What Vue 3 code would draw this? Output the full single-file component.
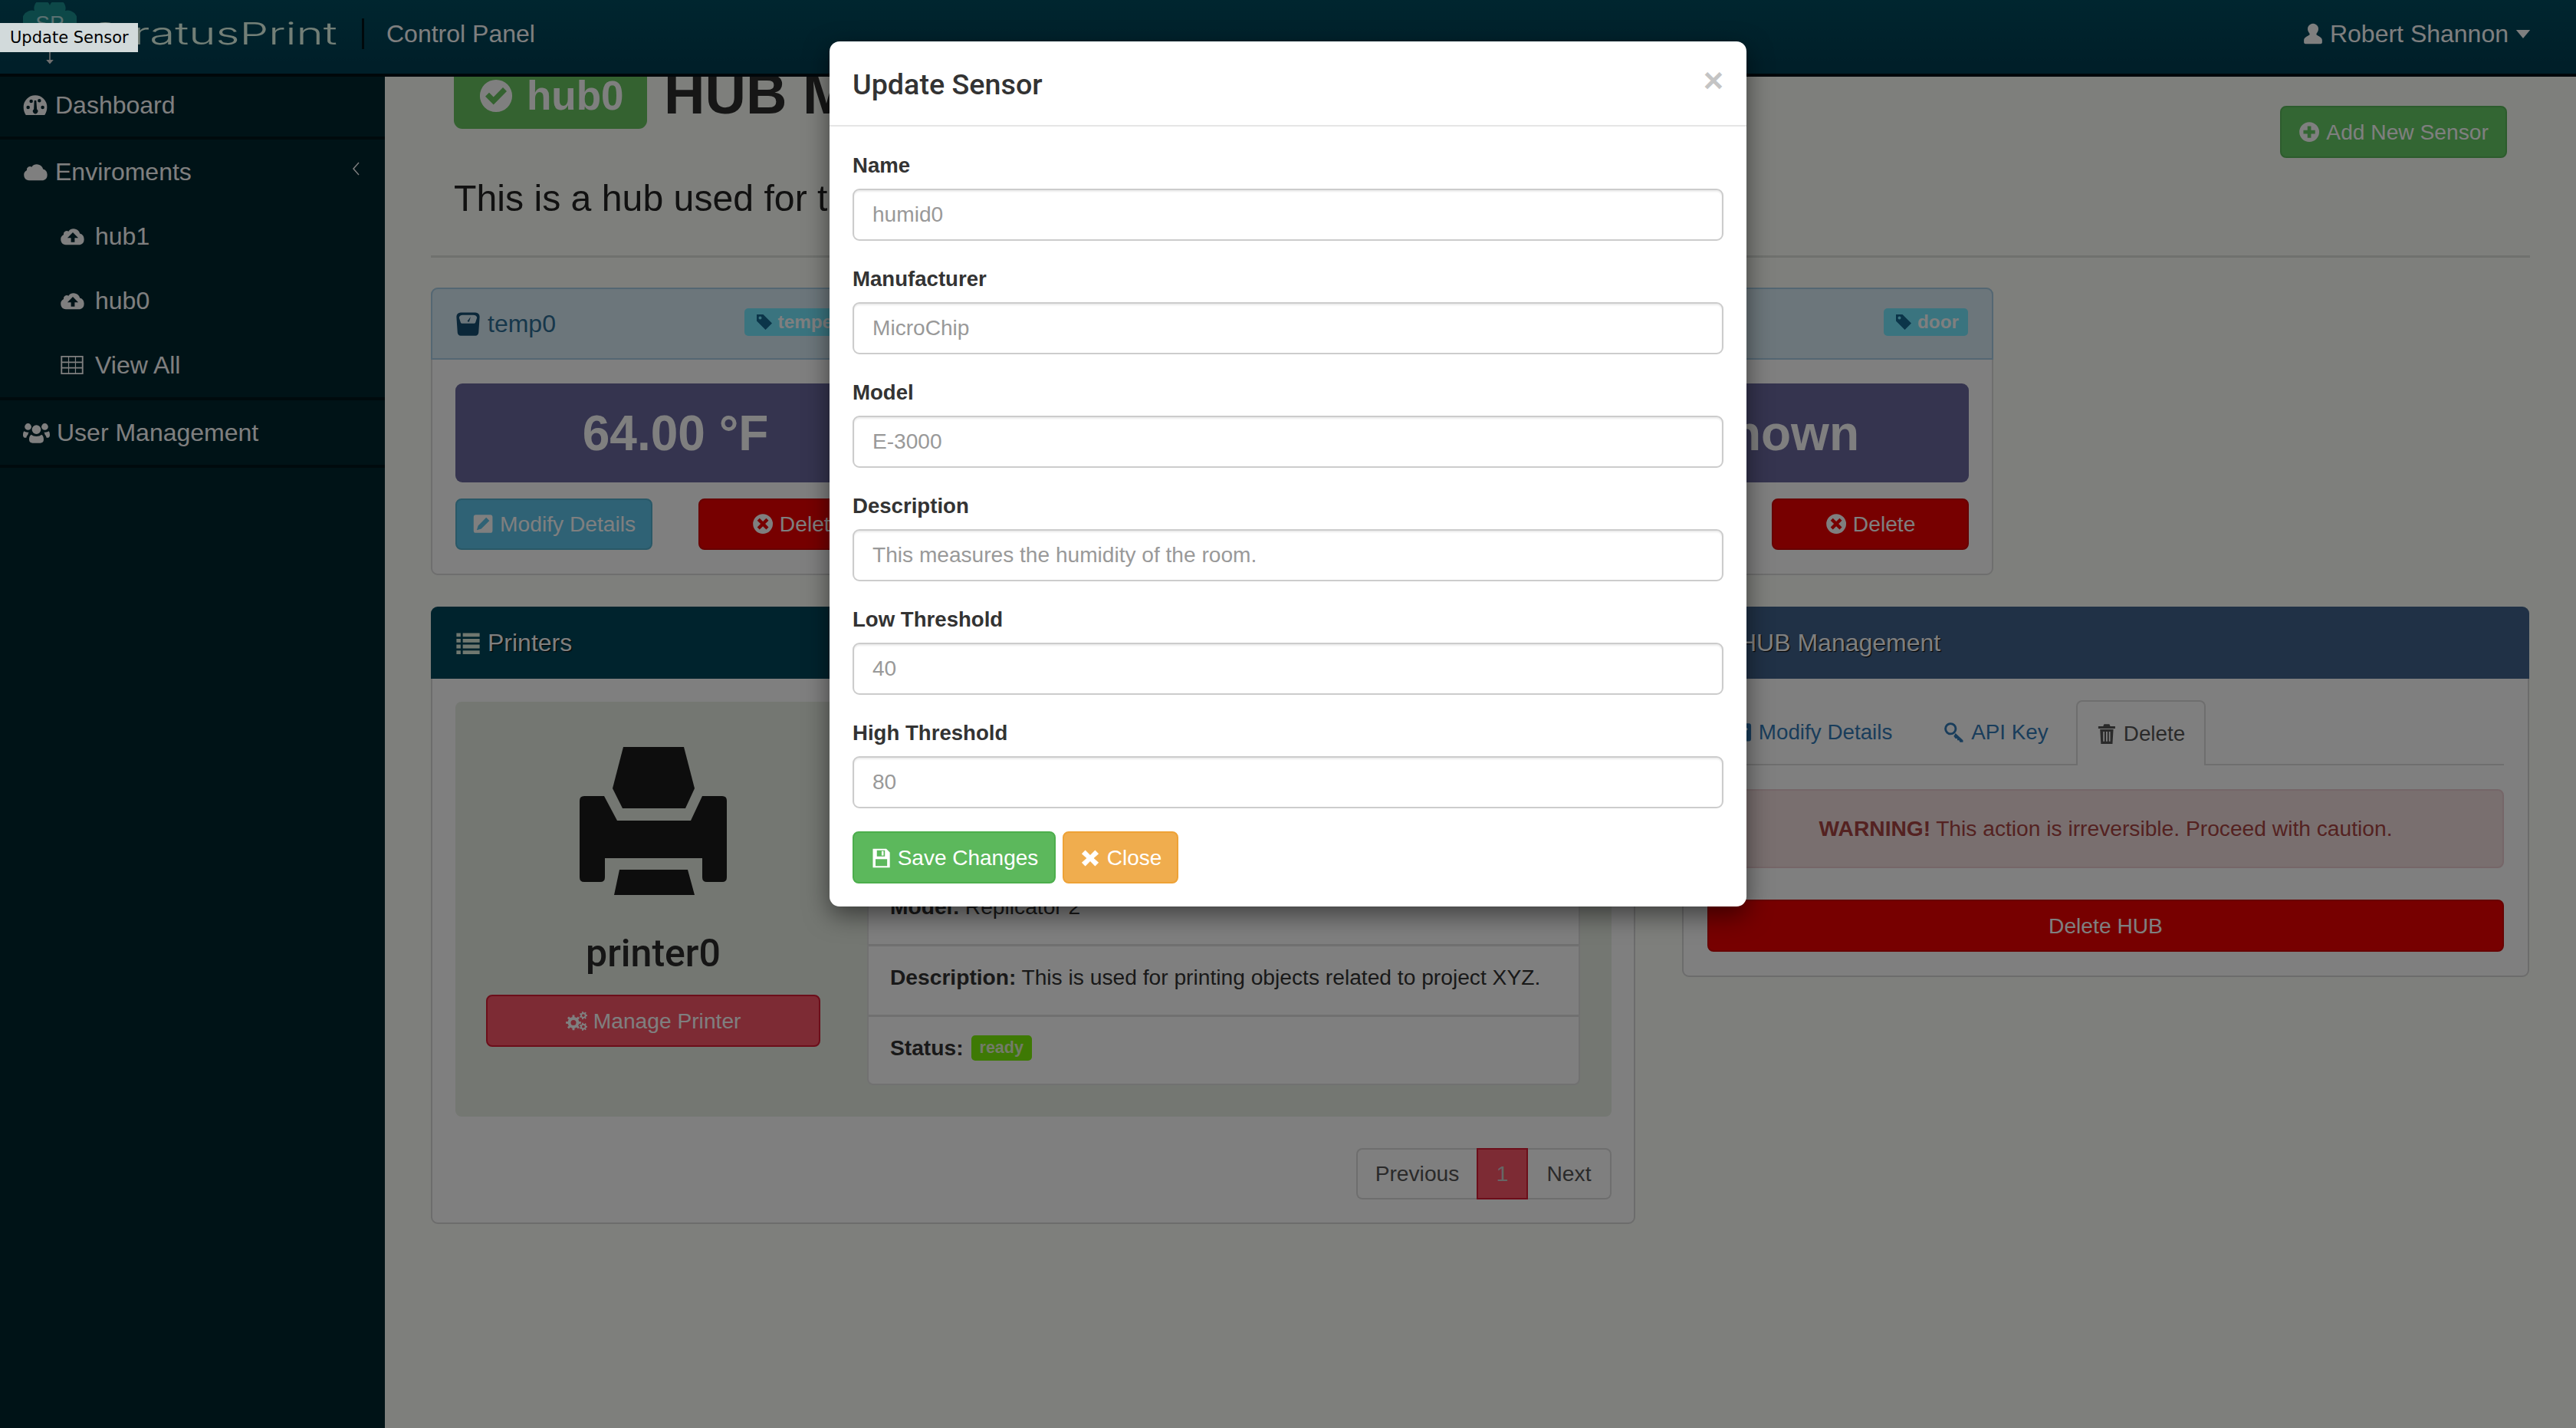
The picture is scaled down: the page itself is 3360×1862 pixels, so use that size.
<script setup>
import { h } from 'vue';

// builds a gear outline with a round hole, used by the cogs icon
const gear = (cx, cy, r, hole, teeth) => {
    let d = '';
    const step = (Math.PI * 2) / teeth;
    for (let i = 0; i < teeth; i++) {
        const a = i * step;
        const pts = [
            [r * 0.74, a - step * 0.5],
            [r * 0.74, a - step * 0.26],
            [r, a - step * 0.18],
            [r, a + step * 0.18],
            [r * 0.74, a + step * 0.26],
        ];
        pts.forEach(([rad, ang], j) => {
            const x = (cx + rad * Math.cos(ang)).toFixed(2);
            const y = (cy + rad * Math.sin(ang)).toFixed(2);
            d += `${i === 0 && j === 0 ? 'M' : 'L'}${x} ${y}`;
        });
    }
    d += `zM${cx - hole} ${cy}a${hole} ${hole} 0 1 0 ${hole * 2} 0a${hole} ${hole} 0 1 0 ${-hole * 2} 0z`;
    return d;
};

const grid = () => {
    let d = 'M1 3h22v18H1z';
    for (const x of [2.4, 9.1, 15.8]) {
        for (const y of [4.4, 9.9, 15.4]) {
            d += `M${x} ${y}h5.8v4.2h-5.8z`;
        }
    }
    return d;
};

const disc = 'M12 1a11 11 0 1 0 0 22a11 11 0 0 0 0-22z';
const cloud = 'M5.500 20A5 5 0 0 1 3.500 10.600A3 3 0 0 1 8 7.500A6 6 0 0 1 18.500 9.500A5.500 5.500 0 0 1 18.500 20z';

const icons = {
    gauge: 'M12 2.5a11.5 11.5 0 0 0-11.5 11.5c0 3 .9 5.6 2.3 7.7h18.4c1.4-2.1 2.3-4.7 2.3-7.7A11.5 11.5 0 0 0 12 2.5zM5 12.5a1.7 1.7 0 1 1 0 3.4a1.7 1.7 0 0 1 0-3.4zM8 6.5a1.7 1.7 0 1 1 0 3.4a1.7 1.7 0 0 1 0-3.4zM16 6a1.7 1.7 0 1 1 0 3.4a1.7 1.7 0 0 1 0-3.4zM19.2 12.5a1.7 1.7 0 1 1 0 3.4a1.7 1.7 0 0 1 0-3.4zM11 7.5l2 0l.6 8.6a2.4 2.4 0 1 1-3 0z',
    cloud,
    cloudUp: cloud + 'M12 8.500l-5 5h3.300v4h3.400v-4H17z',
    table: grid(),
    users: 'M12 5a4 4 0 1 1 0 8a4 4 0 0 1 0-8zM4.5 3.5a3 3 0 1 1 0 6a3 3 0 0 1 0-6zM19.500 3.5a3 3 0 1 1 0 6a3 3 0 0 1 0-6zM7.500 13.500c1 1 2.800 1.500 4.500 1.500s3.500-.5 4.500-1.500c1.500.5 2 2.500 2 4.500c0 2-1.200 3-3 3H8.500c-1.800 0-3-1-3-3c0-2 .5-4 2-4.500zM1 10.500c1 .8 3 1.200 4.300.8c-.5.8-.8 1.200-.8 2c-1 1-1.500 2.200-1.500 3H2c-1 0-2-.6-2-2.300c0-1.500.3-3 1-3.500zM23 10.500c.7.5 1 2 1 3.500c0 1.700-1 2.300-2 2.300h-1c0-.8-.5-2-1.500-3c0-.8-.3-1.200-.8-2c1.300.4 3.300 0 4.300-.8z',
    user: 'M12 1.500a5.500 5.500 0 0 1 5 8c-.6 1.100-1.500 2-1.500 3c0 1.500 6 2.500 6 6v2.500c0 1-.8 1.500-1.700 1.500H4.200c-.9 0-1.700-.5-1.700-1.500v-2.500c0-3.500 6-4.500 6-6c0-1-.9-1.900-1.500-3a5.500 5.500 0 0 1 5-8z',
    check: disc + 'M10.300 18L4.700 12.400L7.300 9.800L10.300 12.800L16.700 6.300L19.300 8.900z',
    plus: disc + 'M10 5.500h4v4.500h4.500v4H14v4.500h-4V14H5.500v-4H10z',
    times: disc + 'M8.300 5.700L12 9.400L15.700 5.700L18.300 8.300L14.600 12L18.300 15.700L15.700 18.300L12 14.600L8.300 18.300L5.700 15.700L9.400 12L5.700 8.300z',
    tag: 'M2 2h8.500L22 13.500L13.500 22L2 10.500zM6.500 4.500a2 2 0 1 0 0 4a2 2 0 0 0 0-4z',
    edit: 'M4 2h16a2.500 2.500 0 0 1 2.500 2.500v15a2.500 2.500 0 0 1-2.500 2.500H4a2.500 2.500 0 0 1-2.500-2.500v-15A2.500 2.500 0 0 1 4 2zM15.500 5l3.500 3.500L10 17.500L5 19l1.500-5z',
    list: 'M1 2.500h4v3.500H1zM7 2.500h16v3.500H7zM1 8h4v3.500H1zM7 8h16v3.500H7zM1 13.500h4v3.500H1zM7 13.500h16v3.500H7zM1 19h4v3.500H1zM7 19h16v3.500H7z',
    cogs: gear(8.5, 14, 8.5, 3, 8) + gear(19.5, 6, 4.5, 1.6, 7) + gear(19.5, 18.5, 4.5, 1.6, 7),
    save: 'M3 1.500h15l4 4v17H3zM7.500 3.300v6.700h9V3.300zM12.800 4h2.200v5h-2.200zM6 13v7.700h13V13z',
    close: 'M6.500 3L12 8.500L17.500 3L21.500 7L16 12L21.500 17L17.500 21L12 15.500L6.500 21L2.500 17L8 12L2.500 7z',
    key: 'M8 1a7 7 0 1 0 0 14a7 7 0 0 0 0-14zM8 3.500a4.500 4.500 0 1 1 0 9a4.500 4.500 0 0 1 0-9zM13.500 13l8.500 8v2h-3.500l-1-2h-2v-2h-2l-2-2.500z',
    trash: 'M9 1h6l1 2.500h5.500V6h-19V3.500H8zM4.500 7h15l-1 16.500H5.500zM8 9.500v11h1.500v-11zM11.200 9.500v11h1.600v-11zM14.500 9.500v11H16v-11z',
    scale: 'M5 1h14a4 4 0 0 1 4 4l-1 15a3 3 0 0 1-3 3H5a3 3 0 0 1-3-3L1 5a4 4 0 0 1 4-4zM7 3.500c-2 0-3.500 1.200-3.500 2.500l1.500 4.500c.3.800 1 1 1.500 1h11c.5 0 1.200-.2 1.500-1L20.500 6c0-1.300-1.500-2.500-3.500-2.500zM14.500 5l-1.500 5l-1.800-.5z',
    left: 'M15.500 3.500L8 12L15.500 20.500L16.500 19.500L10 12L16.500 4.500z',
    caret: 'M2 6.500h20L12 18.500z',
};

const Ico = (props) =>
    h('svg', { class: 'ico', viewBox: '0 0 24 24', fill: 'currentColor' }, [
        h('path', { d: icons[props.name], 'fill-rule': 'evenodd' }),
    ]);
Ico.props = ['name'];

const sensors = [
    { name: 'temp0', type: 'temperature', value: '64.00 °F' },
    { name: 'humid0', type: 'humidity', value: 'Unknown' },
    { name: 'door0', type: 'door', value: 'Unknown' },
];

const fields = [
    { label: 'Name', value: 'humid0' },
    { label: 'Manufacturer', value: 'MicroChip' },
    { label: 'Model', value: 'E-3000' },
    { label: 'Description', value: 'This measures the humidity of the room.' },
    { label: 'Low Threshold', value: '40' },
    { label: 'High Threshold', value: '80' },
];
</script>

<template>
    <div class="app">
        <header class="navbar">
            <svg class="logo" viewBox="0 0 70 62">
                <path d="M14 60A14 14 0 0 1 2 32A13 13 0 0 1 15 11A10 10 0 0 1 35 4A10 10 0 0 1 55 11A13 13 0 0 1 68 32A14 14 0 0 1 56 60z" fill="#1a9090" />
                <text x="35" y="37" text-anchor="middle" class="logo-sp">SP</text>
            </svg>
            <span class="brand"><span class="brand-text">StratusPrint</span></span>
            <span class="nav-div"></span>
            <span class="nav-title">Control Panel</span>
            <span class="nav-user">
                <Ico name="user" class="user-ic" /> Robert Shannon <Ico name="caret" class="user-caret" />
            </span>
        </header>

        <div class="main">
            <aside class="sidebar">
                <a class="s-item s-first"><Ico name="gauge" /><span>Dashboard</span></a>
                <div class="s-group">
                    <a class="s-item s-env">
                        <Ico name="cloud" class="cloud-ic" /><span>Enviroments</span>
                        <Ico name="left" class="s-chev" />
                    </a>
                    <a class="s-sub"><Ico name="cloudUp" class="cloud-ic" /><span>hub1</span></a>
                    <a class="s-sub"><Ico name="cloudUp" class="cloud-ic" /><span>hub0</span></a>
                    <a class="s-sub s-all"><Ico name="table" /><span>View All</span></a>
                </div>
                <div class="s-group"><a class="s-item"><Ico name="users" class="users-ic" /><span>User Management</span></a></div>
            </aside>

            <main class="content">
                <div class="page-head">
                    <div>
                        <h1 class="title">
                            <span class="hub-label"><Ico name="check" />hub0</span>
                            <span>HUB Management</span>
                        </h1>
                        <p class="lead">This is a hub used for the lab.</p>
                    </div>
                    <button class="btn btn-add"><Ico name="plus" /> Add New Sensor</button>
                </div>
                <div class="rule"></div>

                <section class="sensors">
                    <div v-for="s in sensors" :key="s.name" class="panel sensor">
                        <div class="sensor-head">
                            <span class="sensor-name"><Ico name="scale" /> {{ s.name }}</span>
                            <span class="type-badge"><Ico name="tag" /> {{ s.type }}</span>
                        </div>
                        <div class="sensor-body">
                            <div class="stat">{{ s.value }}</div>
                            <div class="sensor-actions">
                                <button class="btn btn-info"><Ico name="edit" /> Modify Details</button>
                                <button class="btn btn-red"><Ico name="times" /> Delete</button>
                            </div>
                        </div>
                    </div>
                </section>

                <section class="lower">
                    <div class="panel">
                        <div class="panel-head head-dark"><Ico name="list" class="head-ic" /> Printers</div>
                        <div class="printers-body">
                            <div class="well">
                                <div class="printer-card">
                                    <svg class="printer-ic" viewBox="0 0 192 193" fill="#1b1b1b">
                                        <path d="M57 0H136L150 54L138 80H56L43 54z" />
                                        <path d="M0 70Q0 64 6 64H32L49 96H145L160 64H186Q192 64 192 70V170Q192 176 186 176H166Q160 176 160 170V145H33V170Q33 176 27 176H6Q0 176 0 170z" />
                                        <path d="M52 160H141L150 193H45z" />
                                    </svg>
                                    <div class="printer-name">printer0</div>
                                    <button class="btn btn-manage"><Ico name="cogs" /> Manage Printer</button>
                                </div>
                                <ul class="info-list">
                                    <li><b>Name:</b> printer0</li>
                                    <li><b>Manufacturer:</b> MakerBot</li>
                                    <li><b>Model:</b> Replicator 2</li>
                                    <li><b>Description:</b> This is used for printing objects related to project XYZ.</li>
                                    <li><b>Status:</b> <span class="ready">ready</span></li>
                                </ul>
                            </div>
                            <nav class="pager">
                                <a class="pg pg-prev">Previous</a>
                                <a class="pg pg-on">1</a>
                                <a class="pg pg-next">Next</a>
                            </nav>
                        </div>
                    </div>

                    <div class="panel">
                        <div class="panel-head head-blue"><Ico name="cogs" class="head-ic" /> HUB Management</div>
                        <div class="mgmt-body">
                            <div class="tabs">
                                <a class="tab tab-modify"><Ico name="edit" /> Modify Details</a>
                                <a class="tab"><Ico name="key" /> API Key</a>
                                <a class="tab tab-on"><Ico name="trash" /> Delete</a>
                            </div>
                            <div class="alert"><b>WARNING!</b> This action is irreversible. Proceed with caution.</div>
                            <button class="btn btn-red btn-wide">Delete HUB</button>
                        </div>
                    </div>
                </section>
            </main>
        </div>

        <!-- modal layer -->
        <div class="backdrop">
            <div class="modal">
                <div class="modal-head">
                    <h4>Update Sensor</h4>
                    <span class="modal-x">×</span>
                </div>
                <form class="modal-body" @submit.prevent>
                    <div v-for="f in fields" :key="f.label" class="field">
                        <label>{{ f.label }}</label>
                        <input type="text" :placeholder="f.value" />
                    </div>
                    <div class="modal-actions">
                        <button class="btn btn-save"><Ico name="save" /> Save Changes</button>
                        <button class="btn btn-close"><Ico name="close" /> Close</button>
                    </div>
                </form>
            </div>
        </div>

        <!-- native tooltip and drag arrow from the captured window -->
        <div class="native-tip">Update Sensor</div>
        <svg class="drag-arrow" viewBox="0 0 12 16" fill="#6f6f6f"><path d="M5.200 0h1.600v10h4L6 15.500L1.200 10h4z" /></svg>
    </div>
</template>

<style>
html, body { margin: 0; background: #7e817c; }
</style>

<style scoped>
.app {
    position: relative; width: 3360px; height: 1862px; overflow: hidden;
    font-family: "Liberation Sans", Arial, sans-serif; font-size: 28.200px; color: #333;
    background: #fcfff8; display: flex; flex-direction: column;
}
.ico { width: 1em; height: 1em; vertical-align: -0.13em; flex-shrink: 0; }
* { box-sizing: border-box; }

.navbar {
    height: 100px; flex-shrink: 0; display: flex; align-items: center; padding: 0 58px 8px 30px;
    background: linear-gradient(#004c5f, #003e52 90%); border-bottom: 4px solid #000f14;
    color: #fff; position: relative; z-index: 2;
}
.logo { width: 70px; height: 62px; align-self: flex-start; margin-top: 3px; flex-shrink: 0; }
.logo-sp { font-family: "Liberation Sans", sans-serif; font-size: 28px; fill: #b5e0e0; }
.brand { width: 354px; margin-left: 18px; height: 46px; display: block; }
.brand-text {
    display: inline-block; font-family: Inter, sans-serif; font-weight: 300; font-size: 40px; line-height: 46px;
    color: #e6ffef; transform: scaleX(1.5); transform-origin: left center; white-space: nowrap;
}
.nav-div { width: 3px; height: 40px; background: #001218; margin-right: 29px; }
.nav-title { font-size: 32px; }
.nav-user { margin-left: auto; font-size: 32px; display: flex; align-items: center; gap: 9px; }
.user-ic { width: 30px; height: 30px; margin-right: -2px; }
.user-caret { width: 22px; height: 22px; margin-left: -1px; }

.main { flex: 1; display: flex; min-height: 0; }
.sidebar {
    width: 502px; flex-shrink: 0; background: #00262f; color: #fff; font-size: 32px; margin-top: -4px;
    position: relative; z-index: 1;
}
.s-item, .s-sub { display: flex; align-items: center; height: 84px; gap: 11px; padding-left: 30px; position: relative; }
.s-first { height: 82px; gap: 10px; }
.s-env { gap: 8px; }
.s-group { border-top: 4px solid #00141a; }
.s-group:last-child { border-bottom: 4px solid #00141a; }
.s-sub { padding-left: 78px; gap: 12px; }
.s-all { gap: 14px; }
.cloud-ic { width: 34px; height: 34px; }
.s-chev { position: absolute; right: 26px; top: 24px; width: 24px; height: 28px; }
.users-ic { width: 35px; height: 35px; margin-right: -2px; }

.content { flex: 1; min-width: 0; padding: 0 60px; overflow: hidden; }
.page-head { display: flex; justify-content: space-between; padding: 0 30px; margin-top: -20px; height: 253px; }
.title { margin: 0; display: flex; align-items: flex-start; font-size: 74px; line-height: 86px; color: #2c2c2c; font-weight: 700; white-space: nowrap; }
.hub-label {
    width: 252px; height: 88px; background: #68c460; border-radius: 11px; color: #fff; font-size: 53px;
    display: flex; align-items: center; padding-left: 32px; gap: 17px; line-height: 1; padding-top: 1px; margin-right: 22px;
}
.hub-label .ico { width: 46px; height: 46px; }
.lead { margin: 60px 0 0; font-size: 48.200px; line-height: 60px; color: #222; }
.btn {
    font: inherit; color: #fff; border: 2px solid transparent; border-radius: 8px; cursor: pointer;
    display: inline-flex; align-items: center; justify-content: center; gap: 8px; height: 68px; padding: 0;
}
.btn-add { width: 296px; height: 68px; margin-top: 58px; background: #67cc67; border-color: #5ab85a; }
.rule { height: 3px; background: #dfe2dc; margin-bottom: 39px; }
.panel { background: #fff; border: 2px solid #d8d8d8; border-radius: 9px; }

.sensors { display: grid; grid-template-columns: repeat(3, 638px); gap: 62px; }
.sensor { height: 375px; border-color: #dcdcdc; }
.sensor-head {
    height: 94px; margin: -2px -2px 0; padding: 0 31px 0 30px; display: flex; align-items: center; justify-content: space-between;
    background: #d9edf7; border: 2px solid #a8cfe6; border-radius: 9px 9px 0 0;
}
.sensor-name { color: #2e6f96; font-size: 32px; display: flex; align-items: center; gap: 9px; }
.sensor-name .ico { width: 33px; height: 33px; color: #174f72; }
.type-badge {
    height: 36px; padding: 0 12px 0 14px; background: #74e8ff; color: #fff; font-size: 24.300px; font-weight: 700;
    border-radius: 5px; display: flex; align-items: center; gap: 6px; margin-top: -4px;
}
.type-badge .ico { color: #176a92; width: 24px; height: 24px; }
.sensor-body { padding: 31px 30px 0; }
.stat {
    height: 129px; background: #6a689e; border-radius: 9px; color: #fff; font-size: 64px; font-weight: 700;
    display: flex; align-items: center; justify-content: center;
}
.sensor-actions { display: flex; justify-content: space-between; margin-top: 21px; }
.sensor-actions .btn { width: 257px; height: 67px; }
.btn-info { background: #5ec4ea; border-color: #52b0cf; }
.btn-red { background: #ee0000; border-color: #d00000; }

.lower { display: grid; grid-template-columns: 1571px 1105px; gap: 61px; align-items: start; margin-top: 41px; }
.panel-head {
    height: 94px; margin: -2px -2px 0; padding-left: 32px; display: flex; align-items: center; gap: 9px;
    font-size: 32px; color: #fff; border-radius: 9px 9px 0 0; text-shadow: 1px 1px 1px #000;
}
.head-dark { background: #00465a; }
.head-blue { background: #41638c; }
.head-ic { width: 33px; height: 33px; color: #e0f0e0; }

.printers-body { padding: 30px 29px 30px 30px; }
.well {
    height: 541px; background: #e8eee4; border-radius: 8px; padding: 40px 41px 41px 40px;
    display: grid; grid-template-columns: 436px 930px; gap: 61px;
}
.printer-card { display: flex; flex-direction: column; align-items: center; }
.printer-ic { width: 192px; height: 193px; margin-top: 19px; flex-shrink: 0; }
.printer-name { font-family: Roboto, sans-serif; font-weight: 500; font-size: 50px; line-height: 60px; margin-top: 46px; color: #2a2a2a; }
.btn-manage { width: 436px; height: 68px; margin-top: 24px; background: #fb5669; border-color: #d81c35; }
.info-list { list-style: none; margin: 0; padding: 0; background: #fff; border: 2px solid #e2e2e2; border-radius: 8px; height: 460px; }
.info-list li { height: 92px; padding: 0 27px 9px 28px; display: flex; align-items: center; gap: 7px; border-top: 3px solid #e0e0e0; white-space: nowrap; color: #333; }
.info-list li:first-child { border-top: 0; height: 90px; }
.ready {
    display: inline-flex; align-items: center; height: 33px; padding: 0 11px; background: #7cf208; color: #e4f6d0;
    font-size: 21.500px; font-weight: 700; border-radius: 5px; margin-left: 3px;
}
.pager { display: flex; justify-content: flex-end; margin-top: 41px; }
.pg { height: 67px; display: flex; align-items: center; justify-content: center; border: 2px solid #ddd; color: #555; }
.pg-prev { width: 157px; border-radius: 8px 0 0 8px; border-right: 0; }
.pg-on { width: 67px; background: #fb5669; border-color: #d81c35; color: #ccc; }
.pg-next { width: 109px; border-radius: 0 8px 8px 0; border-left: 0; }

.mgmt-body { padding: 30px 31px 31px; }
.tabs { display: flex; height: 83px; border-bottom: 2px solid #ddd; align-items: flex-end; gap: 5px; font-size: 27.800px; }
.tab { height: 83px; padding: 0 31px; display: flex; align-items: center; gap: 8px; color: #337ab7; white-space: nowrap; flex-shrink: 0; }
.tab-on { color: #555; border: 2px solid #ddd; border-bottom: 0; border-radius: 8px 8px 0 0; background: #fff; height: 85px; margin-bottom: -2px; width: 169px; padding: 0; justify-content: center; }
.alert {
    height: 103px; margin-top: 31px; display: flex; align-items: center; justify-content: center; gap: 7px;
    background: #f2dede; border: 2px solid #ebccd1; border-radius: 8px; color: #a94442;
}
.btn-wide { width: 100%; height: 68px; margin-top: 41px; }

.backdrop { position: absolute; inset: 0; background: rgba(0, 0, 0, 0.5); display: flex; justify-content: center; align-items: flex-start; z-index: 5; }
.modal { width: 1196px; margin-top: 54px; background: #fff; border-radius: 13px; box-shadow: 0 11px 32px rgba(0, 0, 0, 0.5); }
.modal-head { height: 111px; padding: 0 30px; border-bottom: 2px solid #e5e5e5; display: flex; justify-content: space-between; align-items: center; position: relative; }
.modal-head h4 { margin: 0 0 -2px; font-family: Roboto, sans-serif; font-weight: 500; font-size: 37.700px; color: #333; }
.modal-x { position: absolute; right: 30px; top: 27px; font-size: 45px; line-height: 48px; font-weight: 700; color: #c4c4c4; }
.modal-body { padding: 33px 30px 30px; }
.field { height: 148px; }
.field label { display: block; height: 36px; line-height: 36px; margin-bottom: 12px; font-weight: 700; color: #333; font-size: 27.600px; }
.field input {
    display: block; width: 100%; height: 68px; padding: 0 24px; border: 2px solid #ccc; border-radius: 9px;
    font: inherit; font-size: 28.100px; box-shadow: inset 0 2px 2px rgba(0, 0, 0, 0.075); outline: none; background: #fff;
}
.field input::placeholder { color: #999; opacity: 1; }
.modal-actions { display: flex; gap: 9px; margin-top: -2px; }
.btn-save { width: 265px; height: 68px; background: #5cb85c; border-color: #4cae4c; font-size: 28px; padding-top: 2px; }
.btn-close { width: 151px; height: 68px; background: #f0ad4e; border-color: #eea236; font-size: 28px; padding-top: 2px; }

.native-tip {
    position: absolute; left: 0; top: 30px; width: 180px; height: 38px; z-index: 8; background: #d2dadb; color: #000;
    font-family: "DejaVu Sans", sans-serif; font-size: 21px; line-height: 38px; padding-left: 13px; white-space: nowrap;
}
.drag-arrow { position: absolute; left: 59px; top: 68px; width: 12px; height: 16px; z-index: 8; }
</style>
